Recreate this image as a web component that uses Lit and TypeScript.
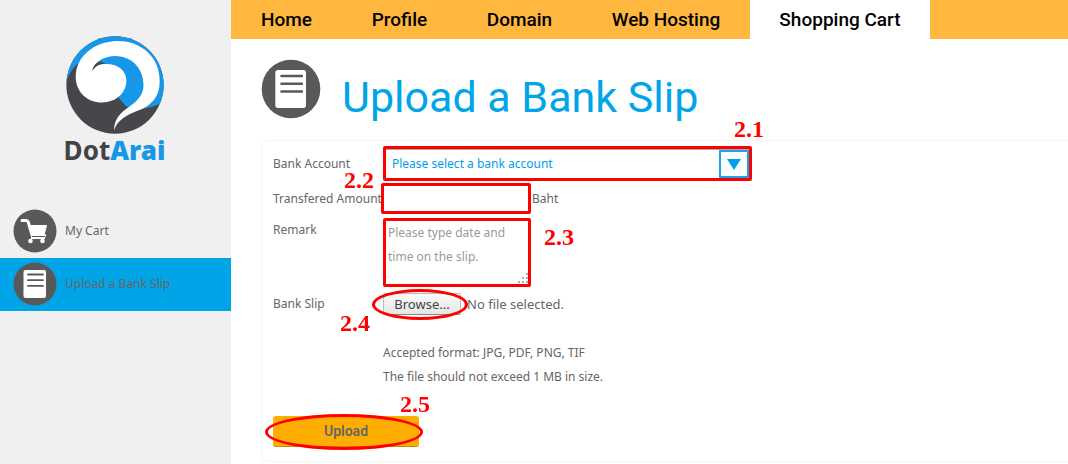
import { LitElement, html, css, svg } from "lit";
import { customElement, state } from "lit/decorators.js";

const cartIcon = svg`
  <circle cx="22" cy="22" r="21.5" fill="#58595b" />
  <path d="M9 11.5h4.3c1 0 1.600.5 1.900 1.500l4 13.500h12.500" fill="none" stroke="#fff" stroke-width="3" stroke-linecap="round" stroke-linejoin="round" />
  <path d="M16.500 16.500h17l-2.500 9.500h-12z" fill="#fff" stroke="#fff" stroke-linejoin="round" />
  <path d="M19 27.500h13" stroke="#58595b" />
  <path d="M18 29h14" stroke="#fff" stroke-width="2" />
  <circle cx="17.500" cy="32" r="2.300" fill="#fff" />
  <circle cx="29.500" cy="32" r="2.300" fill="#fff" />`;

const slipIcon = svg`
  <circle cx="22" cy="22" r="21.500" fill="#58595b" />
  <rect x="10.500" y="8" width="22.500" height="28" rx="2" fill="#fff" />
  <path d="M15 12.500h15M15 18.200h15M15 23.900h15" stroke="#58595b" stroke-width="1.800" stroke-linecap="round" />`;

@customElement("app-root")
export class AppRoot extends LitElement {
  @state() private fileName = "No file selected.";

  static styles = css`
    :host {
      display: block;
      font: 12px/24px "Noto Sans", "Open Sans", sans-serif;
      color: #666;
      background: #fff;
    }
    * { box-sizing: border-box; }
    a { color: inherit; text-decoration: none; }
    svg { display: block; flex: none; }
    input, select, textarea, button { font: inherit; margin: 0; }

    .page { display: grid; grid-template-columns: 231px 1fr; min-height: 100vh; }
    .sidebar { background: #f0f0f0; }
    .logo {
      display: flex; flex-direction: column; align-items: center;
      padding: 36px 2px 0 0; height: 205px;
      font: 700 26px/32px "Noto Sans", "Open Sans", sans-serif;
      color: #414347;
    }
    .logo b { color: #1697ea; }
    .side-link {
      display: flex; align-items: center; gap: 8px;
      height: 53px; padding: 0 0 2px 13px;
    }
    .side-link.active { background: #00a5e8; }

    .tabs {
      display: grid;
      grid-template-columns: 111px 115px 125px 168px 180px;
      background: #ffb740;
      color: #000;
      font: 500 19px/39px Roboto, sans-serif;
      text-align: center;
    }
    .tab.active { background: #fff; }

    .content { padding: 20px 0 0 30px; overflow: hidden; }
    .heading { display: flex; align-items: flex-start; gap: 21px; }
    h1 {
      margin: 8px 0 0;
      font: 400 43px/60px Roboto, sans-serif;
      color: #00a5e8;
    }
    form {
      margin-top: 13px;
      padding: 5px 12px 14px 11px;
      border: 1px solid #f6f6f6;
      border-right: 0;
      border-radius: 8px 0 0 8px;
    }
    .row { display: flex; align-items: center; position: relative; width: fit-content; }
    .row > label:first-child, .spacer { width: 110px; flex: none; }
    .row > .tight:first-child { width: 108px; white-space: nowrap; }
    .framed { border: 3px solid #f00; border-radius: 2px; background: #fff; display: block; }
    .account { position: relative; width: 369px; height: 35px; }
    select {
      appearance: none; width: 100%; height: 29px; padding: 0 34px 0 6px;
      border: 0; border-top: 1px solid #aaa; background: #fff; color: #00a0e6;
    }
    .arrow { position: absolute; top: 1px; right: 0; pointer-events: none; }
    .amount-row { margin-top: 2px; }
    .amount { width: 150px; height: 31px; padding: 0 4px; margin-right: 1px; }
    .remark-row { margin-top: 4px; align-items: flex-start; }
    .remark { width: 148px; height: 69px; padding: 0 2px; resize: both; overflow: hidden; }
    .remark::placeholder { color: #999; opacity: 1; }
    .remark::-webkit-resizer {
      background:
        linear-gradient(#aaa, #aaa) 100% 4px / 2px 2px no-repeat,
        repeating-linear-gradient(90deg, transparent 0 2px, #fff 2px 4px) 100% 100% / 10px 8px no-repeat,
        linear-gradient(#aaa, #aaa) 100% 8px / 6px 2px no-repeat,
        linear-gradient(#aaa, #aaa) 100% 12px / 10px 2px no-repeat;
    }
    .slip-row { margin-top: 6px; height: 22px; }
    .picker {
      display: flex; position: relative; align-items: center; gap: 6px;
      font: 13px/20px "Noto Sans", "Open Sans", sans-serif;
    }
    .browse {
      width: 78px; height: 22px; text-align: center;
      border: 1px solid #bbb; border-bottom-color: #888; border-radius: 2px;
      background: linear-gradient(#fafafa, #e6e6e6); color: #444;
    }
    .picker input { position: absolute; inset: 0; width: 100%; opacity: 0; cursor: pointer; }
    .hint { display: flex; margin-top: 26px; }
    .hint p { margin: 0; }
    .upload-row { margin-top: 27px; }
    .upload {
      width: 146px; height: 31px;
      border: 0; border-bottom: 1px solid #c88a10; border-radius: 3px;
      background: #ffad00; color: #666;
      font: 600 14px/24px Roboto, sans-serif;
    }
    .note {
      position: absolute;
      color: #f00; pointer-events: none;
      font: 700 24px/24px "Liberation Serif", serif;
    }
    .n1 { left: 461px; top: -29px; }
    .n2 { left: 71px; top: -15px; }
    .n3 { left: 271px; top: 7px; }
    .n4 { left: 67px; top: 18px; }
    .n5 { left: 127px; top: -24px; }
    .ring { position: absolute; border: 3px solid #f00; border-radius: 50%; pointer-events: none; }
    .ring-browse { left: 99px; top: -4px; width: 96px; height: 31px; }
    .ring-upload { left: -8px; top: -2px; width: 158px; height: 36px; }
  `;

  private pick(e: Event) {
    const file = (e.target as HTMLInputElement).files?.[0];
    this.fileName = file ? file.name : "No file selected.";
  }

  render() {
    const tabs = ["Home", "Profile", "Domain", "Web Hosting", "Shopping Cart"];
    return html`
      <div class="page">
        <aside class="sidebar">
          <a class="logo" href="#" aria-label="DotArai">
            <svg width="98" height="98" viewBox="48 33 292 292" aria-hidden="true">
              <clipPath id="disc"><circle cx="194" cy="179" r="145" /></clipPath>
              <circle cx="194" cy="179" r="145" fill="#46474b" />
              <path clip-path="url(#disc)" fill="#1697ea" d="M48 170V30H342V215L334 232C315 242 295 248 270 250L228 243L205 218L228 160L155 110L80 118Q62 134 48 170Z" />
              <path fill="#fff" d="M192 315C200 280 240 264 276 250C315 230 332 200 326 150C318 85 262 47 200 48C130 50 77 95 77 155C77 200 112 231 155 231C200 231 228 200 228 165C228 135 200 112 155 117C140 119 133 127 126 137C133 108 165 92 200 93C250 95 279 135 279 180C279 215 250 235 228 250C203 268 190 290 192 315Z" />
              <path fill="#46474b" d="M126 137C130 120 141 111 158 110L150 118C140 120 133 127 126 137Z" />
            </svg>
            <span>Dot<b>Arai</b></span>
          </a>
          <nav>
            <a class="side-link" href="#"><svg width="44" height="44" viewBox="0 0 44 44">${cartIcon}</svg>My Cart</a>
            <a class="side-link active" href="#"><svg width="44" height="44" viewBox="0 0 44 44">${slipIcon}</svg>Upload a Bank Slip</a>
          </nav>
        </aside>
        <main>
          <nav class="tabs">
            ${tabs.map((t) => html`<a class="tab ${t === "Shopping Cart" ? "active" : ""}" href="#">${t}</a>`)}
          </nav>
          <div class="content">
            <header class="heading">
              <svg width="60" height="60" viewBox="0 0 44 44">${slipIcon}</svg>
              <h1>Upload a Bank Slip</h1>
            </header>
            <form @submit=${(e: Event) => e.preventDefault()}>
              <div class="row">
                <label for="account">Bank Account</label>
                <div class="framed account">
                  <select id="account"><option>Please select a bank account</option></select>
                  <svg class="arrow" width="30" height="28" viewBox="0 0 30 28">
                    <rect x="1" y="1" width="28" height="26" fill="#fff" stroke="#1ba4ee" stroke-width="2" />
                    <path d="M8 9h14l-7 11z" fill="#009ff0" />
                  </svg>
                </div>
                <span class="note n1">2.1</span>
              </div>
              <div class="row amount-row">
                <label class="tight" for="amount">Transfered Amount</label>
                <input class="framed amount" id="amount" type="text" />
                <span>Baht</span>
                <span class="note n2">2.2</span>
              </div>
              <div class="row remark-row">
                <label for="remark">Remark</label>
                <textarea class="framed remark" id="remark" placeholder="Please type date and time on the slip."></textarea>
                <span class="note n3">2.3</span>
              </div>
              <div class="row slip-row">
                <label for="slip">Bank Slip</label>
                <div class="picker">
                  <span class="browse">Browse...</span><span>${this.fileName}</span>
                  <input id="slip" type="file" @change=${this.pick} />
                </div>
                <span class="ring ring-browse"></span>
                <span class="note n4">2.4</span>
              </div>
              <div class="hint">
                <span class="spacer"></span>
                <div>
                  <p>Accepted format: JPG, PDF, PNG, TIF</p>
                  <p>The file should not exceed 1 MB in size.</p>
                </div>
              </div>
              <div class="row upload-row">
                <button class="upload" type="submit">Upload</button>
                <span class="ring ring-upload"></span>
                <span class="note n5">2.5</span>
              </div>
            </form>
          </div>
        </main>
      </div>
    `;
  }
}
